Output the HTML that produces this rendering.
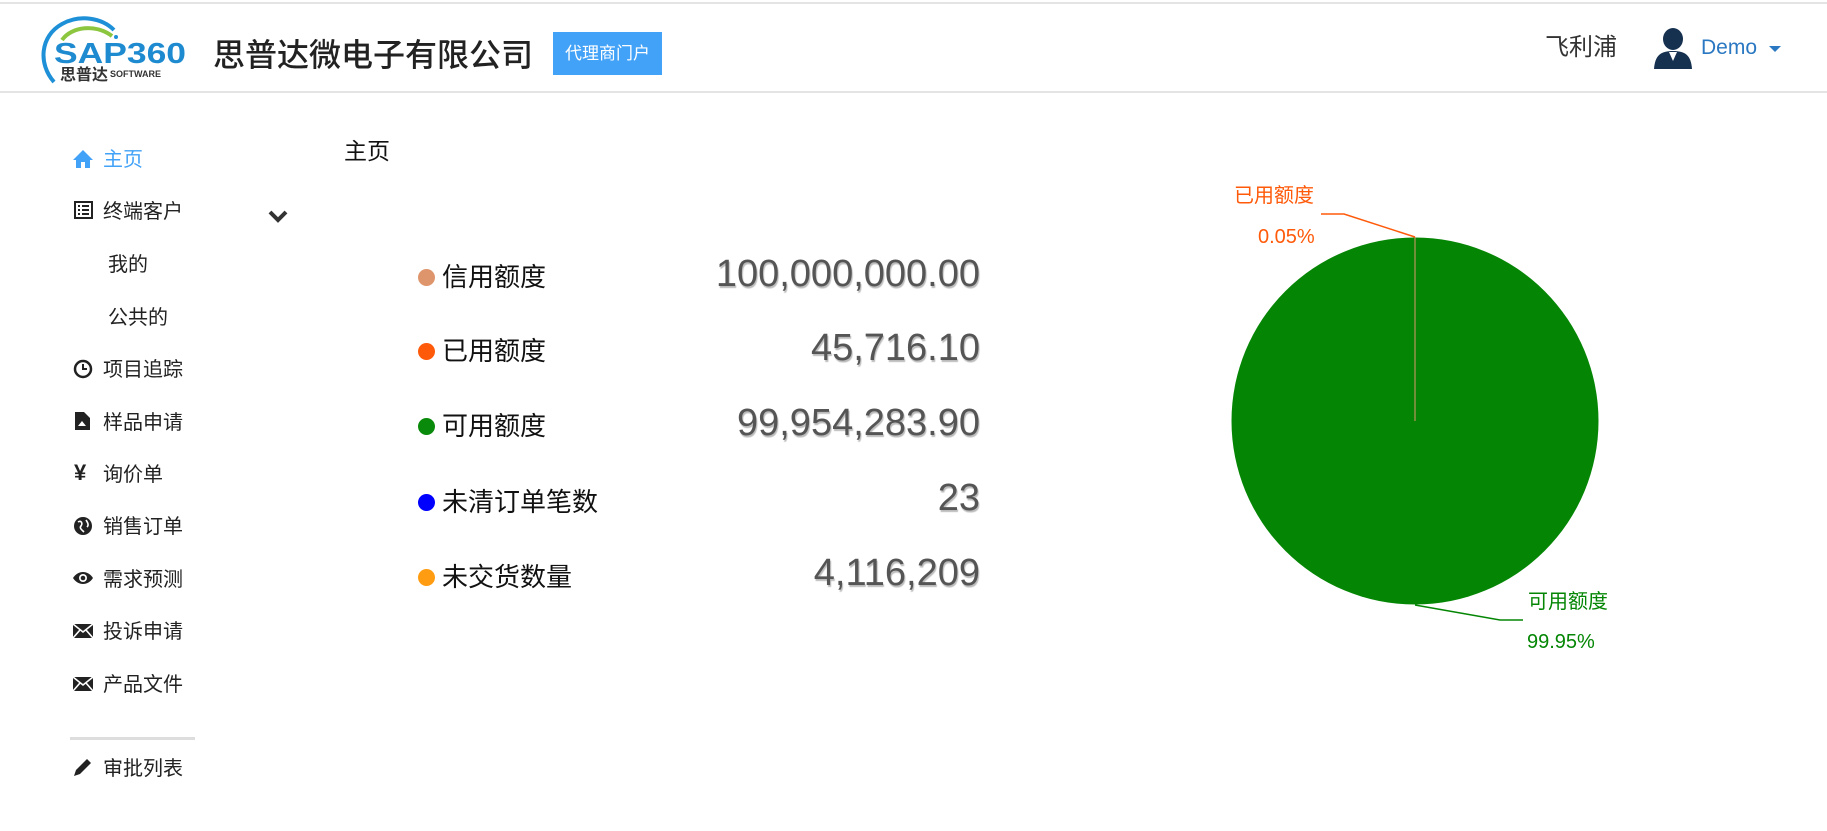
<!DOCTYPE html>
<html><head><meta charset="utf-8"><style>
*{margin:0;padding:0;box-sizing:border-box}
body{width:1827px;height:831px;background:#fff;font-family:"Liberation Sans","Noto Sans CJK SC",sans-serif;position:relative;overflow:hidden;color:#222}
.a{position:absolute;white-space:nowrap}
.hdr{position:absolute;left:0;top:2px;width:1827px;height:91px;border-top:2px solid #e4e4e4;border-bottom:2px solid #e4e4e4}
.nav{font-size:20px;color:#222;line-height:24px}
.nav svg{position:absolute}
.lbl{font-size:26px;line-height:30px;color:#111}
.val{font-size:38px;line-height:40px;color:#555;text-shadow:1px 2px 1px #bbb;right:847px;text-align:right}
.dot{width:17px;height:17px;border-radius:50%}
</style></head><body>
<div class="hdr"></div>
<!-- logo -->
<svg class="a" style="left:40px;top:16px" width="150" height="68" viewBox="0 0 150 68">
<path d="M14 66 C-2 48 0 20 22 8 C40 -2 62 2 74 14" fill="none" stroke="#1e90d8" stroke-width="4"/>
<path d="M22 24 C32 10 56 8 72 20" fill="none" stroke="#8cc63f" stroke-width="4"/>
<circle cx="76" cy="21" r="2" fill="#1e90d8"/>
<text x="14" y="47" font-family="Liberation Sans,sans-serif" font-size="29" fill="#1e8ad0" font-weight="bold" textLength="132" lengthAdjust="spacingAndGlyphs">SAP360</text>
<text x="20" y="64" font-family="Noto Sans CJK SC,sans-serif" font-size="16" fill="#333" font-weight="bold">思普达</text>
<text x="70" y="61" font-family="Liberation Sans,sans-serif" font-size="9" fill="#333" font-weight="bold">SOFTWARE</text>
</svg>
<div class="a" style="left:213px;top:34px;font-size:32px;line-height:42px;color:#222;font-weight:500">思普达微电子有限公司</div>
<div class="a" style="left:553px;top:32px;width:109px;height:43px;background:#42a2f7;color:#fff;font-size:17px;line-height:43px;text-align:center">代理商门户</div>
<div class="a" style="left:1545px;top:33px;font-size:24px;line-height:30px;color:#333">飞利浦</div>
<svg class="a" style="left:1653px;top:27px" width="40" height="43" viewBox="0 0 40 43">
<ellipse cx="20" cy="12" rx="10" ry="11" fill="#16304f"/>
<path d="M1 42 C2 28 8 24 20 24 C32 24 38 28 39 42 Z" fill="#16304f"/>
<path d="M16 25 L20 34 L24 25 Z" fill="#fff"/>
</svg>
<div class="a" style="left:1701px;top:34px;font-size:21px;line-height:28px;color:#2a78c2">Demo</div>
<div class="a" style="left:1769px;top:46px;width:0;height:0;border-left:6px solid transparent;border-right:6px solid transparent;border-top:6px solid #2a78c2"></div>

<!-- sidebar -->
<div class="a nav" style="left:103px;top:148px;color:#42a2f7">主页</div>
<svg class="a" style="left:72px;top:149px" width="22" height="20" viewBox="0 0 22 20"><path d="M11 1 L1 11 H4 V19 H9 V13 H13 V19 H18 V11 H21 Z" fill="#42a2f7"/></svg>
<div class="a nav" style="left:103px;top:200px">终端客户</div>
<svg class="a" style="left:74px;top:201px" width="19" height="18" viewBox="0 0 19 18"><rect x="1" y="1" width="17" height="16" fill="none" stroke="#222" stroke-width="2"/><path d="M4 5h2M8 5h7M4 9h2M8 9h7M4 13h2M8 13h7" stroke="#222" stroke-width="2"/></svg>
<svg class="a" style="left:268px;top:210px" width="20" height="13" viewBox="0 0 20 13"><path d="M2 2 L10 10 L18 2" fill="none" stroke="#333" stroke-width="4"/></svg>
<div class="a nav" style="left:108px;top:253px">我的</div>
<div class="a nav" style="left:108px;top:306px">公共的</div>
<div class="a nav" style="left:103px;top:358px">项目追踪</div>
<svg class="a" style="left:73px;top:359px" width="20" height="20" viewBox="0 0 20 20"><circle cx="10" cy="10" r="8" fill="none" stroke="#222" stroke-width="2.5"/><path d="M10 5 V10 H14" fill="none" stroke="#222" stroke-width="2"/></svg>
<div class="a nav" style="left:103px;top:411px">样品申请</div>
<svg class="a" style="left:74px;top:411px" width="17" height="20" viewBox="0 0 17 20"><path d="M1 1 H10 L16 7 V19 H1 Z" fill="#222"/><path d="M8 10 L4 15 H12 Z" fill="#fff"/></svg>
<div class="a nav" style="left:103px;top:463px">询价单</div>
<div class="a" style="left:74px;top:460px;font-size:22px;font-weight:bold">¥</div>
<div class="a nav" style="left:103px;top:515px">销售订单</div>
<svg class="a" style="left:73px;top:516px" width="20" height="20" viewBox="0 0 20 20"><circle cx="10" cy="10" r="9" fill="#222"/><path d="M5 6 C8 4 10 7 8 10 C6 12 9 14 11 16 M13 4 C15 7 16 9 14 11" stroke="#fff" stroke-width="1.6" fill="none"/></svg>
<div class="a nav" style="left:103px;top:568px">需求预测</div>
<svg class="a" style="left:72px;top:570px" width="22" height="16" viewBox="0 0 22 16"><path d="M1 8 C6 0 16 0 21 8 C16 16 6 16 1 8Z" fill="#222"/><circle cx="11" cy="8" r="4" fill="#fff"/><circle cx="11" cy="8" r="2.3" fill="#222"/></svg>
<div class="a nav" style="left:103px;top:620px">投诉申请</div>
<svg class="a" style="left:72px;top:623px" width="22" height="16" viewBox="0 0 22 16"><rect x="1" y="1" width="20" height="14" fill="#222"/><path d="M1 1 L11 9 L21 1 M1 15 L8 7 M21 15 L14 7" stroke="#fff" stroke-width="1.6" fill="none"/></svg>
<div class="a nav" style="left:103px;top:673px">产品文件</div>
<svg class="a" style="left:72px;top:676px" width="22" height="16" viewBox="0 0 22 16"><rect x="1" y="1" width="20" height="14" fill="#222"/><path d="M1 1 L11 9 L21 1 M1 15 L8 7 M21 15 L14 7" stroke="#fff" stroke-width="1.6" fill="none"/></svg>
<div class="a" style="left:70px;top:737px;width:125px;height:3px;background:#ddd"></div>
<div class="a nav" style="left:103px;top:757px">审批列表</div>
<svg class="a" style="left:72px;top:757px" width="21" height="21" viewBox="0 0 21 21"><path d="M2 19 L4 13 L15 2 L19 6 L8 17 Z" fill="#222"/></svg>

<div class="a" style="left:344px;top:137px;font-size:23px;line-height:28px;color:#111">主页</div>

<!-- legend -->
<div class="a dot" style="left:418px;top:269px;background:#de956b"></div>
<div class="a lbl" style="left:442px;top:262px">信用额度</div>
<div class="a val" style="top:254px">100,000,000.00</div>
<div class="a dot" style="left:418px;top:343px;background:#ff5a0a"></div>
<div class="a lbl" style="left:442px;top:336px">已用额度</div>
<div class="a val" style="top:328px">45,716.10</div>
<div class="a dot" style="left:418px;top:418px;background:#0a8a0a"></div>
<div class="a lbl" style="left:442px;top:411px">可用额度</div>
<div class="a val" style="top:403px">99,954,283.90</div>
<div class="a dot" style="left:418px;top:494px;background:#0000ff"></div>
<div class="a lbl" style="left:442px;top:487px">未清订单笔数</div>
<div class="a val" style="top:478px">23</div>
<div class="a dot" style="left:418px;top:569px;background:#ff9c12"></div>
<div class="a lbl" style="left:442px;top:562px">未交货数量</div>
<div class="a val" style="top:553px">4,116,209</div>

<!-- pie -->
<svg class="a" style="left:0;top:0" width="1827" height="831">
<circle cx="1415" cy="421" r="183.5" fill="#048604"/>
<line x1="1415" y1="237" x2="1415" y2="421" stroke="#de956b" stroke-width="1"/>
<polyline points="1321,214 1344,214 1415,237" fill="none" stroke="#ff5a0a" stroke-width="1.5"/>
<polyline points="1415,605 1500,620 1523,620" fill="none" stroke="#048604" stroke-width="1.5"/>
</svg>
<div class="a" style="left:1234px;top:183px;font-size:20px;line-height:26px;color:#ff5a0a">已用额度</div>
<div class="a" style="left:1258px;top:224px;font-size:20px;line-height:26px;color:#ff5a0a">0.05%</div>
<div class="a" style="left:1528px;top:589px;font-size:20px;line-height:26px;color:#048604">可用额度</div>
<div class="a" style="left:1527px;top:629px;font-size:20px;line-height:26px;color:#048604">99.95%</div>
</body></html>
